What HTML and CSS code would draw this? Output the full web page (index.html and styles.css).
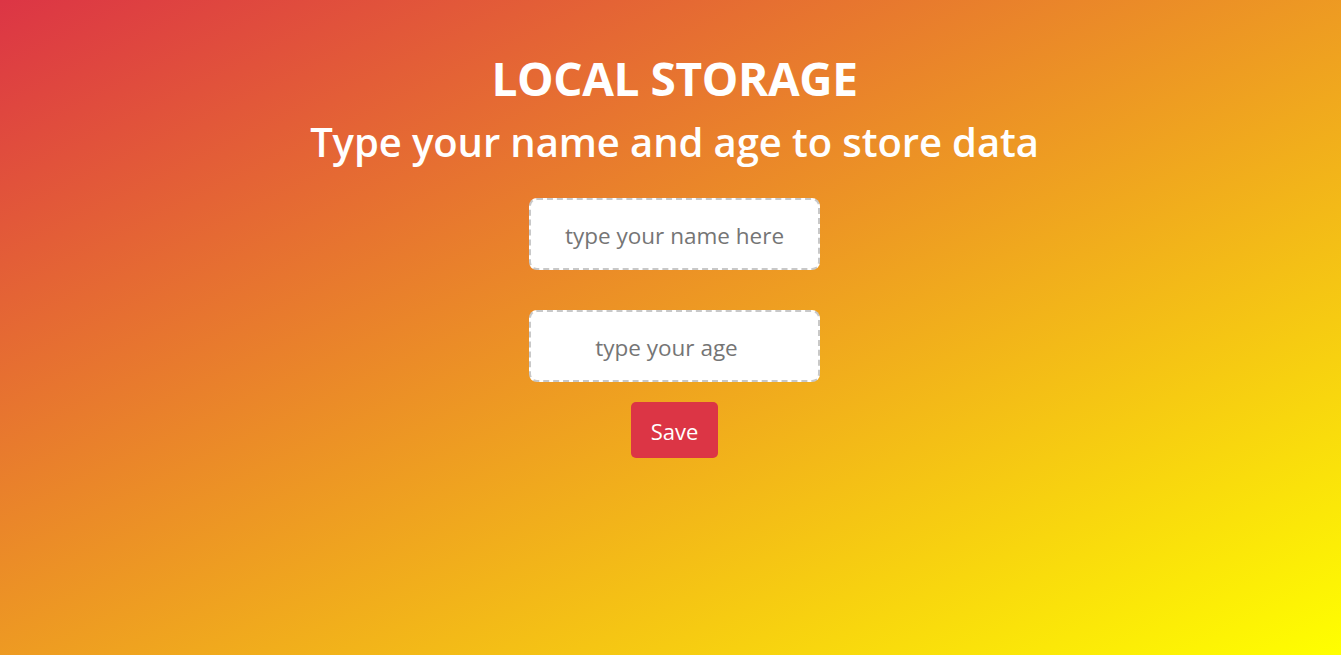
FILE: index.html
```html
<!DOCTYPE html>
<html lang="en">
<head>
<meta charset="utf-8">
<title>Local Storage</title>
<link rel="stylesheet" href="styles.css">
</head>
<body>
<main class="page">
  <h1 class="title">LOCAL STORAGE</h1>
  <h2 class="subtitle">Type your name and age to store data</h2>
  <form class="form">
    <input class="field" type="text" placeholder="type your name here">
    <input class="field field-age" type="number" placeholder="type your age">
    <button class="save" type="button">Save</button>
  </form>
</main>
</body>
</html>
```
FILE: styles.css
```css
html, body {
  margin: 0;
  height: 100%;
}
body {
  background: linear-gradient(to bottom right, #dc3545, #ffff00);
  font-family: "Open Sans", "Noto Sans", sans-serif;
  color: #fff;
}
.page {
  display: flex;
  flex-direction: column;
  align-items: center;
  padding: 50px 0 0 8px;
}
.title {
  margin: 0;
  font-size: 46px;
  font-weight: 700;
  line-height: 56px;
  letter-spacing: -0.4px;
}
.subtitle {
  margin: 8px 0 0;
  font-size: 40px;
  font-weight: 600;
  line-height: 56px;
  letter-spacing: -0.1px;
}
.form {
  display: flex;
  flex-direction: column;
  align-items: center;
  margin-top: 28px;
}
.field {
  box-sizing: border-box;
  width: 291px;
  height: 72px;
  border: 2px dashed #c8c8c8;
  border-radius: 8px;
  background: #fff;
  font-family: inherit;
  font-size: 22.5px;
  color: #495057;
  text-align: center;
  outline: none;
  padding: 3px 12px 0;
}
.field::placeholder {
  color: #757575;
}
.field-age {
  margin-top: 40px;
  padding-right: 28px;
}
.field-age::-webkit-inner-spin-button,
.field-age::-webkit-outer-spin-button {
  -webkit-appearance: none;
  margin: 0;
}
.save {
  margin-top: 20px;
  width: 87px;
  height: 56px;
  border: none;
  border-radius: 5px;
  background: #dc3545;
  color: #fff;
  font-family: inherit;
  font-size: 22px;
  padding: 2px 0 0;
  cursor: pointer;
}
```
